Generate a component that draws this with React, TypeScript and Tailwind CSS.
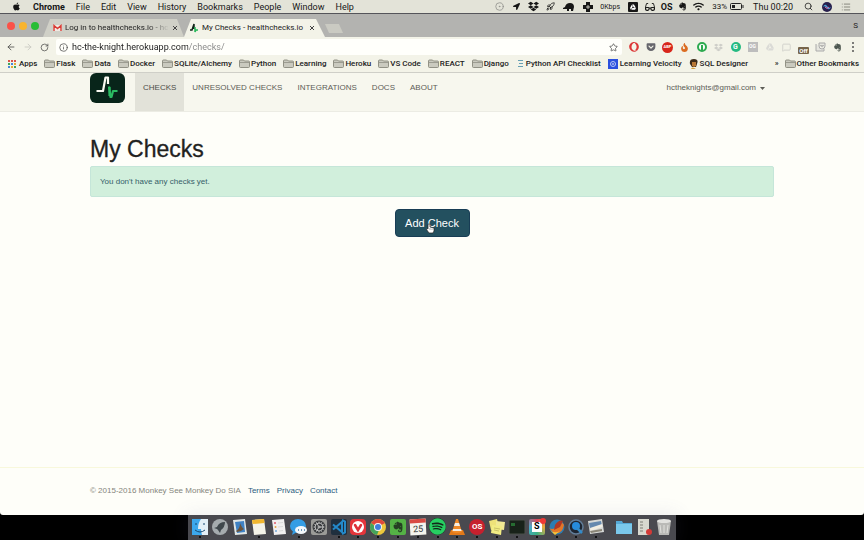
import type { ReactNode } from 'react';
import {
  FaApple, FaDropbox, FaEvernote, FaGetPocket, FaGlasses, FaGoogleDrive, FaLocationArrow, FaFire,
  FaSpotify, FaOpera, FaWifi,
} from 'react-icons/fa';
import { ArrowLeft, ArrowRight, Info, List, Rocket, RotateCw, Search, Star, Cog, CircleDot, MessageSquare } from 'lucide-react';

const menus = ['File', 'Edit', 'View', 'History', 'Bookmarks', 'People', 'Window', 'Help'];
const folders = ['Flask', 'Data', 'Docker', 'SQLite/Alchemy', 'Python', 'Learning', 'Heroku', 'VS Code', 'REACT', 'Django'];
const navLinks = ['UNRESOLVED CHECKS', 'INTEGRATIONS', 'DOCS', 'ABOUT'];

function Slot({ children, w = 'w-[17px]' }: { children: ReactNode; w?: string }) {
  return <span className={`flex shrink-0 items-center justify-center ${w}`}>{children}</span>;
}

function Folder() {
  return (
    <svg width="11" height="9" viewBox="0 0 11 9" aria-hidden="true">
      <path d="M.5 2Q.5 1 1.500 1h3l1 1h4q1 0 1 1v4.500q0 1-1 1h-8q-1 0-1-1Z" fill="#cacabf" stroke="#88887c" strokeWidth=".9" />
      <path d="M1 3.500h9" stroke="#88887c" strokeWidth=".7" />
    </svg>
  );
}

function Heartbeat() {
  return (
    <svg width="35" height="30" viewBox="0 0 35 30" aria-hidden="true">
      <rect width="35" height="30" rx="6" fill="#08251a" />
      <path d="M6.500 18H13l2.500-13.500H18V11" fill="none" stroke="#fafaf2" strokeWidth="2.200" strokeLinejoin="round" />
      <path d="M19 13.500 20.500 24h1L23 18h4.500" fill="none" stroke="#2bbb62" strokeWidth="2.200" strokeLinejoin="round" />
      <path d="M19.500 14v9" stroke="#2bbb62" strokeWidth="2.200" />
    </svg>
  );
}

function MenuBar() {
  return (
    <header className="flex h-[14px] shrink-0 items-center justify-between border-b border-[#55555a] bg-[#e3e3d8] pr-[13px] pl-3 text-[9px] leading-3 text-[#161616]">
      <nav className="flex items-center gap-[11px]" aria-label="System menu">
        <FaApple size={9} className="mr-[1px]" />
        <button className="font-bold">Chrome</button>
        {menus.map((m) => <button key={m}>{m}</button>)}
      </nav>
      <div className="flex items-center text-[#161616]">
        <Slot><CircleDot size={9} className="text-[#8c8c88]" /></Slot>
        <Slot><FaLocationArrow size={7} /></Slot>
        <Slot><FaDropbox size={11} /></Slot>
        <Slot><Rocket size={9} /></Slot>
        <Slot w="w-[20px]">
          <svg width="12" height="10" viewBox="0 0 12 10"><path d="M0 6 2 5Q3 1 7 1q4 0 4 4l-1 4H8V7H6v2H4V7L0 7Z" fill="currentColor" /></svg>
        </Slot>
        <Slot>
          <svg width="10" height="10" viewBox="0 0 10 10"><path d="M3 0h4v3h3v4H7v3H3V7H0V3h3Z" fill="currentColor" /><path d="M5 3v4M3 5h4" stroke="#e3e3d8" strokeWidth=".8" /></svg>
        </Slot>
        <Slot w="w-[28px]"><span className="whitespace-nowrap text-[7px]">0Kbps</span></Slot>
        <Slot><span className="rounded-[1px] bg-[#161616] p-[2px] text-white"><FaGoogleDrive size={6} /></span></Slot>
        <Slot><FaGlasses size={10} /></Slot>
        <Slot><span className="text-[9px] font-bold">OS</span></Slot>
        <Slot w="w-[15px]"><FaEvernote size={9} /></Slot>
        <Slot><FaWifi size={11} /></Slot>
        <span className="ml-[5px] text-[8px]">33%</span>
        <svg className="mr-[9px] ml-[3px]" width="14" height="7" viewBox="0 0 14 7"><rect x=".5" y=".5" width="11" height="6" rx="1" fill="none" stroke="#222" /><path d="M2 2h3v3H2ZM12.500 2h1v3h-1Z" fill="#222" /></svg>
        <span>Thu 00:20</span>
        <Search size={9} className="ml-[11px]" />
        <svg className="mx-[9px]" width="10" height="10" viewBox="0 0 10 10"><circle cx="5" cy="5" r="5" fill="#28204e" /><path d="M1 5q2-4 4-1t4 1q-2 4-4 1t-4-1" fill="#4ba4d9" /><path d="M3 5q2 3 4 0" stroke="#e26aa6" fill="none" /></svg>
        <List size={10} className="text-[#77776e]" />
      </div>
    </header>
  );
}

function TabStrip() {
  return (
    <div className="flex h-[23px] shrink-0 items-end bg-[#b3b3b0] pl-[7px] text-[8px] leading-[10px] text-[#222]">
      <div className="flex h-full items-center gap-[4px]">
        <span className="size-[8px] rounded-full bg-[#fb5148]" />
        <span className="size-[8px] rounded-full bg-[#f8b42e]" />
        <span className="size-[8px] rounded-full bg-[#27bd36]" />
      </div>
      <div className="ml-[4px] flex h-[18px] w-[141px] items-center bg-[#d0d0c7] pl-[10px] [clip-path:polygon(7px_0,134px_0,100%_100%,0_100%)]">
        <svg className="shrink-0" width="9" height="8" viewBox="0 0 9 8"><path d="M0 1h9v6H0Z" fill="#f2e9e2" /><path d="M1 7V1.500l3.500 3 3.500-3V7" fill="none" stroke="#d93b35" strokeWidth="1.400" /></svg>
        <button className="ml-[3px] w-[104px] text-left whitespace-nowrap [mask-image:linear-gradient(to_right,black_80%,transparent)]">Log in to healthchecks.io - hc</button>
        <button className="ml-[3px]" aria-label="Close mail tab">
          <svg width="6" height="6" viewBox="0 0 6 6"><path d="m1 1 4 4M5 1 1 5" stroke="#444" /></svg>
        </button>
      </div>
      <div className="flex h-[18px] w-[141px] items-center bg-[#f3f3e8] pl-[6px] [clip-path:polygon(7px_0,132px_0,100%_100%,0_100%)]">
        <svg className="shrink-0" width="8" height="10" viewBox="0 0 8 10"><path d="M0 7h2l2-6v5" fill="none" stroke="#12261a" strokeWidth="1.500" /><path d="M5 4v5l1-2h2" fill="none" stroke="#27b859" strokeWidth="1.500" /></svg>
        <button className="ml-[4px] w-[104px] text-left whitespace-nowrap">My Checks - healthchecks.io</button>
        <button className="ml-[3px]" aria-label="Close checks tab">
          <svg width="6" height="6" viewBox="0 0 6 6"><path d="m1 1 4 4M5 1 1 5" stroke="#444" /></svg>
        </button>
      </div>
      <button aria-label="New tab" className="mb-[4px] h-[9px] w-[18px] bg-[#cacac2] [clip-path:polygon(0_0,14px_0,100%_100%,4px_100%)]" />
      <button className="mr-[6px] mb-[6px] ml-auto">S</button>
    </div>
  );
}

function Toolbar() {
  return (
    <div className="flex h-[20px] shrink-0 items-center bg-[#f3f3e8] pr-[5px] pl-[6px] text-[#4e4e4c]">
      <button aria-label="Back"><ArrowLeft size={10} /></button>
      <button aria-label="Forward" className="ml-[7px] text-[#c8c8c0]"><ArrowRight size={10} /></button>
      <button aria-label="Reload" className="ml-[7px]"><RotateCw size={9} /></button>
      <div className="ml-[7px] flex h-[16px] min-w-0 flex-1 items-center rounded-[2px] bg-[#fffffb] pr-[4px] pl-[3px]">
        <Info size={9} className="shrink-0" />
        <input
          aria-label="Address"
          defaultValue="hc-the-knight.herokuapp.com/checks/"
          className="ml-[4px] min-w-0 flex-1 bg-[linear-gradient(to_right,#1c1c1c_116px,#858585_116px)] bg-clip-text text-[9px] leading-3 text-transparent outline-none"
        />
        <button aria-label="Bookmark this page"><Star size={9} /></button>
      </div>
      <div className="ml-[3px] flex items-center">
        <Slot><FaOpera size={10} className="text-[#dc3737]" /></Slot>
        <Slot><FaGetPocket size={10} className="text-[#66666c]" /></Slot>
        <Slot><span className="flex size-[11px] items-center justify-center rounded-full bg-[#d8261b] text-[4px] font-bold text-white">ABP</span></Slot>
        <Slot><FaFire size={9} className="text-[#db6c22]" /></Slot>
        <Slot><span className="flex size-[10px] items-center justify-center rounded-full border-2 border-[#2eaa50] bg-white"><span className="h-[5px] w-[2px] bg-[#2eaa50]" /></span></Slot>
        <Slot><FaDropbox size={9} className="text-[#cdcdc8]" /></Slot>
        <Slot><span className="flex size-[10px] items-center justify-center rounded-full bg-[#26ba82] text-[7px] font-bold text-white">G</span></Slot>
        <Slot><span className="flex size-[10px] items-center justify-center bg-[#bdbdbd] text-[5px] font-bold text-white">OG</span></Slot>
        <Slot><FaGoogleDrive size={8} className="text-[#dadad6]" /></Slot>
        <Slot><MessageSquare size={9} className="text-[#c8c8c4]" /></Slot>
        <Slot><span className="mt-[6px] rounded-[1px] bg-[#76644a] px-[1px] text-[6px] leading-[7px] font-bold text-white">Off</span></Slot>
        <Slot>
          <svg width="11" height="10" viewBox="0 0 11 10"><path d="M1 2v7h8V7M4 1h6v3q0 3-3 3T4 4Z" fill="#e6e6df" stroke="#aaa" /><path d="m5.500 3 1.500 1.500L8.500 3" fill="none" stroke="#888" /></svg>
        </Slot>
        <Slot><FaEvernote size={9} className="text-[#4d5750]" /></Slot>
        <button aria-label="Browser menu" className="flex w-[13px] flex-col items-center gap-[2px]">
          <span className="size-[2px] rounded-full bg-[#555]" />
          <span className="size-[2px] rounded-full bg-[#555]" />
          <span className="size-[2px] rounded-full bg-[#555]" />
        </button>
      </div>
    </div>
  );
}

function Bookmark({ icon, label }: { icon: ReactNode; label: string }) {
  return <a href="#" className="flex shrink-0 items-center gap-px whitespace-nowrap">{icon}{label}</a>;
}

function BookmarksBar() {
  return (
    <nav aria-label="Bookmarks" className="flex h-[16px] shrink-0 items-center gap-[7px] border-b border-[#cfcfc8] bg-[#f3f3e8] pr-[5px] pb-[2px] pl-[8px] text-[8px] leading-[10px] font-medium text-[#222]">
      <Bookmark label="Apps" icon={
        <svg className="mr-[2px]" width="8" height="8" viewBox="0 0 8 8">
          <path d="M0 0h2v2H0ZM3 0h2v2H3ZM6 0h2v2H6Z" fill="#dd5247" />
          <path d="M0 3h2v2H0ZM6 6h2v2H6Z" fill="#3fa55d" />
          <path d="M3 3h2v2H3ZM0 6h2v2H0Z" fill="#4787d8" />
          <path d="M6 3h2v2H6ZM3 6h2v2H3Z" fill="#e6ac32" />
        </svg>
      } />
      {folders.map((f) => <Bookmark key={f} label={f} icon={<Folder />} />)}
      <Bookmark label="Python API Checklist" icon={
        <svg width="9" height="9" viewBox="0 0 9 9"><path d="M2 1.500h5M3 4.500h4M2 7.500h5" stroke="#67a0b4" /></svg>
      } />
      <Bookmark label="Learning Velocity" icon={
        <svg className="mr-px" width="10" height="10" viewBox="0 0 10 10"><path d="M0 0h10v10H0Z" fill="#2b50de" /><circle cx="5" cy="5" r="2.500" fill="none" stroke="#b8c8f5" /><circle cx="5" cy="5" r=".8" fill="#fff" /></svg>
      } />
      <Bookmark label="SQL Designer" icon={
        <svg className="mr-px" width="9" height="10" viewBox="0 0 9 10"><path d="M1 5Q0 0 5 0t3 5l-1 3H3Z" fill="#3d2b19" /><path d="M3 3h4v4L5 8 3 7Z" fill="#b87735" /><path d="M2 10q1-3 5 0Z" fill="#d6a13d" /></svg>
      } />
      <div className="ml-auto flex items-center gap-[6px]">
        <button aria-label="More bookmarks">»</button>
        <Bookmark label="Other Bookmarks" icon={<Folder />} />
      </div>
    </nav>
  );
}

function Page() {
  return (
    <div className="flex flex-1 flex-col rounded-b-[3px] bg-[#fefef9] font-['Liberation_Sans',Arial,sans-serif] text-[8px] leading-3 text-[#333]">
      <div className="border-b border-[#ecece4] bg-[#f7f7ee]">
        <div className="mx-auto flex h-[38px] max-w-[684px] items-start text-[#5c5c56]">
          <a href="#" aria-label="healthchecks.io"><Heartbeat /></a>
          <nav className="ml-[10px] flex h-full gap-px" aria-label="Main">
            <a href="#" className="bg-[#e2e2d9] px-[8px] pt-[9px] text-[#4c4c48]">CHECKS</a>
            {navLinks.map((l) => <a key={l} href="#" className="px-[7px] pt-[9px]">{l}</a>)}
          </nav>
          <button className="mt-[9px] mr-[9px] ml-auto flex items-center gap-[4px]">
            hctheknights@gmail.com
            <svg width="5" height="3" viewBox="0 0 5 3"><path d="M0 0h5L2.500 3Z" fill="#5c5c56" /></svg>
          </button>
        </div>
      </div>
      <main className="mx-auto w-full max-w-[684px] flex-1 pt-[24px]">
        <h1 className="text-[23px] leading-[26px] font-medium text-[#22221e] [-webkit-text-stroke:0.3px_#22221e]">My Checks</h1>
        <div role="status" className="mt-[4px] rounded-[2px] border border-[#c5e6d9] bg-[#d1efdc] px-[9px] pt-[9px] pb-[8px] text-[#356069]">You don't have any checks yet.</div>
        <div className="mt-[12px] flex justify-center">
          <div className="relative">
            <button className="h-[28px] w-[75px] rounded-[4px] border border-[#183d55] bg-[#23505f] text-[11px] text-white">Add Check</button>
            <svg className="absolute top-[14px] left-[31px]" width="9" height="11" viewBox="0 0 9 11"><path d="M2 5V1.500q1-1.500 2 0V4l4 1v3L7 10H3L.5 6.500Q1 5 2 6Z" fill="#fff" stroke="#222" strokeWidth=".7" /><path d="M4 5v2M6 5.500V7" stroke="#555" strokeWidth=".5" /></svg>
          </div>
        </div>
      </main>
      <footer className="border-t border-[#f8f8dc]">
        <div className="mx-auto flex max-w-[684px] gap-[7px] pt-[17px] pb-[18px] text-[#2c5d80]">
          <span className="text-[#85857c]">© 2015-2016 Monkey See Monkey Do SIA</span>
          <a href="#">Terms</a><a href="#">Privacy</a><a href="#">Contact</a>
        </div>
      </footer>
    </div>
  );
}

function Art({ children }: { children: ReactNode }) {
  return <svg width="18" height="18" viewBox="0 0 18 18">{children}</svg>;
}

const dockApps: { name: string; art: ReactNode; running?: boolean }[] = [
  { name: 'Finder', running: true, art: <Art><path d="M1 1h16v16H1Z" fill="#3ca8ed" /><path d="M10 1h7v16h-6q-1-3-1-6H7q0-6 3-10" fill="#e3eff7" /><path d="M5 5v2M13 5v2M4 12q5 4 10 0" stroke="#164970" fill="none" /></Art> },
  { name: 'Launchpad', art: <Art><circle cx="9" cy="9" r="8" fill="#a5abae" /><path d="M14 4Q8 4 6 9L3 10l3 1 1 1 2 3 1-3q4-3 4-8" fill="#3f474c" /></Art> },
  { name: 'Mail', art: <Art><path d="m2 2 12-1 2 15-12 1Z" fill="#e1e7e7" /><path d="m4 4 9-1 1 11-8 1Z" fill="#3f82c4" /><path d="M5 13q4-2 4-8 2 5 4 6l-3 2-4 1" fill="#6b543c" /></Art> },
  { name: 'Notes', running: true, art: <Art><path d="m2 2 12-1 2 15-12 1Z" fill="#f4f3e8" /><path d="m2 2 12-1 .5 4-12 1Z" fill="#f1b72f" /></Art> },
  { name: 'Reminders', art: <Art><path d="m2 2 12-1 2 15-12 1Z" fill="#f1f0f0" /><circle cx="5" cy="5" r="1" fill="#dc586b" /><circle cx="5.500" cy="9" r="1" fill="#e7a443" /><circle cx="6" cy="13" r="1" fill="#73a9d8" /><path d="m8 5 5-.5M8 9l5-.5M9 13l4-.5" stroke="#c9c9c9" strokeWidth=".6" /></Art> },
  { name: 'Messages', running: true, art: <Art><ellipse cx="8" cy="8" rx="8" ry="7" fill="#349de5" /><path d="m3 13-1 4 5-3" fill="#349de5" /><ellipse cx="11" cy="12" rx="6" ry="4" fill="#f4f8fc" /><path d="M8 12h1M11 12h1M14 12h1" stroke="#447ca8" strokeWidth="1.500" /></Art> },
  { name: 'System Preferences', art: <Art><rect x="1" y="1" width="16" height="16" rx="2" fill="#9b9b98" /><circle cx="9" cy="9" r="6.500" fill="#393b3e" /><g transform="translate(3 3)"><Cog size={12} color="#bbb" /></g></Art> },
  { name: 'Code', running: true, art: <Art><rect x="1" y="1" width="16" height="16" rx="2" fill="#1f2f3e" /><path d="M3 6.500 12 14V4L3 11.500M12 2l3 1.500v11L12 16" fill="none" stroke="#2489ca" strokeWidth="2" /></Art> },
  { name: 'Vivaldi', running: true, art: <Art><rect x="1" y="1" width="16" height="16" rx="4" fill="#e4353b" /><circle cx="9" cy="9" r="6" fill="#fff" /><path d="m6 7 3 5 3-5" fill="none" stroke="#dd3038" strokeWidth="2.500" strokeLinecap="round" /></Art> },
  { name: 'Chrome', running: true, art: <Art><circle cx="9" cy="9" r="8" fill="#edc73c" /><path d="M9 9 2 5Q5 1 9 1t7 4Z" fill="#df493d" /><path d="M2 5q-3 7 3 11l3 1 2-5-3-3Z" fill="#45a45c" /><circle cx="9" cy="9" r="4" fill="#f4f4f4" /><circle cx="9" cy="9" r="3" fill="#427fdb" /></Art> },
  { name: 'Evernote', running: true, art: <span className="flex size-[16px] items-center justify-center rounded-[2px] bg-[#55b346] text-[#253f23]"><FaEvernote size={12} /></span> },
  { name: 'Calendar', running: true, art: <span className="flex size-[16px] -rotate-3 items-end justify-center border-t-4 border-[#d94b43] bg-[#f5f5ee] text-[9px] leading-[11px] text-[#333]">25</span> },
  { name: 'Spotify', running: true, art: <span className="flex size-[17px] rounded-full bg-[#14271a]"><FaSpotify size={17} className="text-[#27cf62]" /></span> },
  { name: 'VLC', running: true, art: <Art><path d="M3 12h12l2 5H1Z" fill="#e17919" /><path d="m8 1 2 0 4 13q-5 2-10 0Z" fill="#f18a28" /><path d="m7 5h4l1 3H6ZM5 11h8l.7 2H4.500Z" fill="#f4eee4" /></Art> },
  { name: 'Last.fm', running: true, art: <span className="flex size-[16px] items-center justify-center rounded-full bg-[#c6202e] text-[8px] font-bold text-white">OS</span> },
  { name: 'Stickies', running: true, art: <Art><path d="m1 3 8-2 2 9-8 2Z" fill="#eee279" /><path d="m8 3 9 1-1 8-8-1Z" fill="#f1e995" /><path d="m4 7 10 1-1 9-10-2Z" fill="#f2ec83" /><path d="m6 10 6 1M6 12l5 1" stroke="#aca554" strokeWidth=".6" /></Art> },
  { name: 'Terminal', running: true, art: <Art><rect x="1" y="2" width="16" height="14" rx="1" fill="#182219" stroke="#4b514b" /><path d="M4 5v3M6 5v3" stroke="#35b84b" /></Art> },
  { name: 'Slack', running: true, art: <span className="relative flex size-[16px] items-center justify-center rounded-[2px] bg-[conic-gradient(#df4359,#e9aa3d,#3ab083,#48aacc,#df4359)]"><span className="flex size-[10px] items-center justify-center bg-white text-[9px] font-bold text-black">S</span><span className="absolute -top-px -right-px size-[6px] rounded-full bg-[#ef3835]" /></span> },
  { name: 'Browser', running: true, art: <Art><circle cx="9" cy="9" r="7.500" fill="#2b7db4" /><path d="M1 10q6 4 12-7l3 4q-2 10-10 8Z" fill="#e47728" /><path d="M7 7q4-6 8-4l-3 6-6 3Z" fill="#af3927" /><path d="M2 12q4 4 10 1l-5 4Z" fill="#f3c23a" /></Art> },
  { name: 'QuickTime', running: true, art: <Art><circle cx="9" cy="9" r="7" fill="#1e2632" stroke="#617d99" strokeWidth="1.500" /><circle cx="9" cy="8" r="4" fill="#268bdc" /><path d="m10 10 5 5" stroke="#338bc9" strokeWidth="2.500" /></Art> },
  { name: 'Preview', running: true, art: <Art><path d="m1 3 14-2 2 13-14 2Z" fill="#d7d9d7" /><path d="m2 5 12-2 1 5-12 3Z" fill="#6589af" /><path d="m3 10 12-4 .5 3-12 4Z" fill="#f1ede2" /><path d="m3 13 12-2v2L4 15Z" fill="#8a8577" /></Art> },
];

const dockFiles: { name: string; art: ReactNode }[] = [
  { name: 'Folder', art: <Art><path d="M1 3h6l1 2h9v11H1Z" fill="#55a9d6" /><path d="M1 6h16v10H1Z" fill="#7ac8eb" /></Art> },
  { name: 'Documents', art: <Art><path d="M3 1h11v16H3Z" fill="#d8d8cf" /><path d="M5 4h3M5 7h3M5 10h3M5 13h3" stroke="#7c7c74" /><circle cx="14" cy="14" r="3" fill="#d33a37" /></Art> },
  { name: 'Trash', art: <Art><path d="M2 3h14l-2 14H4Z" fill="#babab7" /><ellipse cx="9" cy="3" rx="7" ry="2" fill="#e2e2df" /><path d="m5 7 1 8M9 7v8M13 7l-1 8" stroke="#e1e1dd" /></Art> },
];

function Dock() {
  return (
    <footer className="flex h-[25px] shrink-0 justify-center bg-black">
      <div className="flex w-[488px] gap-[8px] bg-[#49494f] px-[2px] shadow-[0_0_18px_2px_#6060a018]">
        <div className="flex flex-1">
          {dockApps.map((a) => (
            <button key={a.name} aria-label={a.name} className="flex flex-1 flex-col items-center pt-[2px]">
              <span className="flex h-[19px] items-center">{a.art}</span>
              {a.running && <span className="size-[2px] rounded-full bg-black" />}
            </button>
          ))}
        </div>
        <div className="flex">
          {dockFiles.map((a) => (
            <button key={a.name} aria-label={a.name} className="flex w-[20px] justify-center pt-[3px]">{a.art}</button>
          ))}
        </div>
      </div>
    </footer>
  );
}

export default function App() {
  return (
    <div className="flex min-h-screen flex-col bg-black font-[Roboto,sans-serif]">
      <MenuBar />
      <TabStrip />
      <Toolbar />
      <BookmarksBar />
      <Page />
      <Dock />
    </div>
  );
}
